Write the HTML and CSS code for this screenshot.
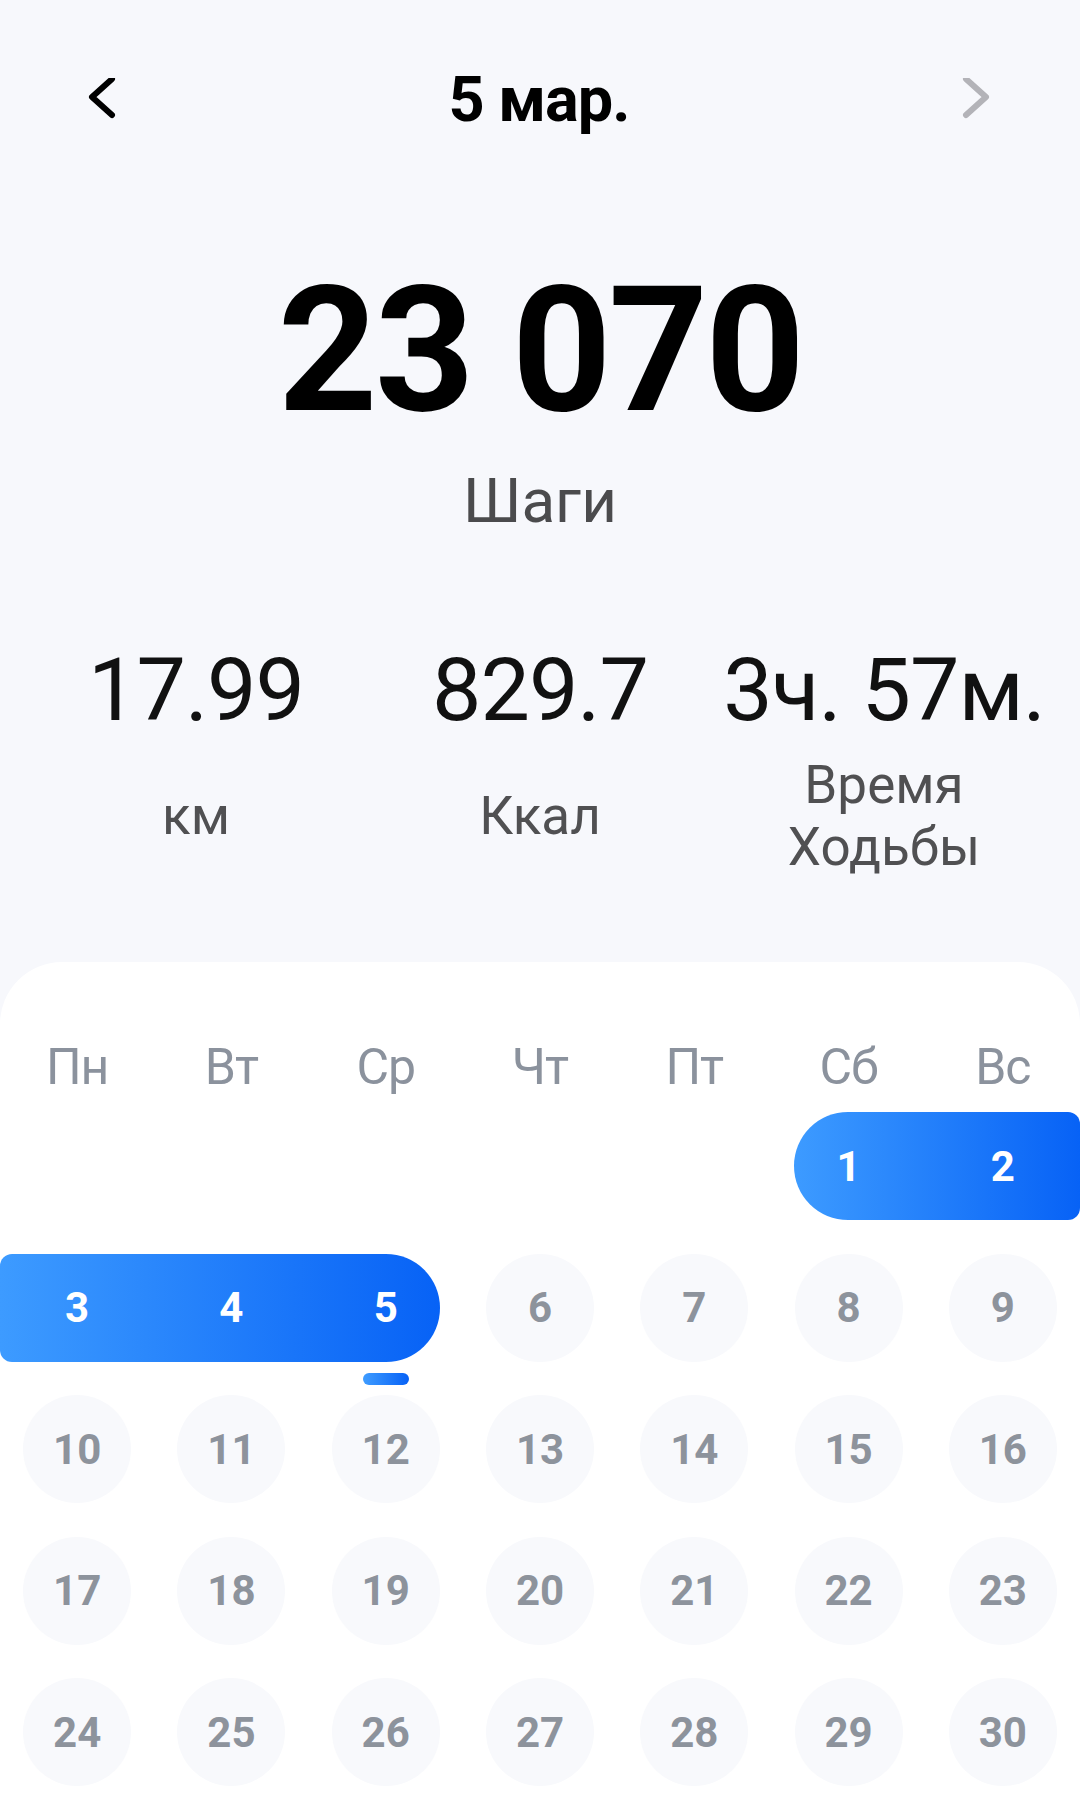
FILE: index.html
```html
<!DOCTYPE html>
<html lang="ru">
<head>
<meta charset="utf-8">
<title>Шаги</title>
<link rel="stylesheet" href="styles.css">
</head>
<body>
<div class="page">
  <header class="header">
    <svg class="chev" width="30" height="44" viewBox="0 0 30 44"><path d="M26 1 L6 19 L26 37" fill="none" stroke="#000" stroke-width="6" stroke-linecap="round" stroke-linejoin="round"/></svg>
    <div class="title">5 мар.</div>
    <svg class="chev" width="30" height="44" viewBox="0 0 30 44"><path d="M4 1 L24 19 L4 37" fill="none" stroke="#b3b3b8" stroke-width="6" stroke-linecap="round" stroke-linejoin="round"/></svg>
  </header>

  <div class="steps">23 070</div>
  <div class="steps-label">Шаги</div>

  <div class="stats">
    <div class="stat">
      <div class="stat-value">17.99</div>
      <div class="stat-label">км</div>
    </div>
    <div class="stat">
      <div class="stat-value">829.7</div>
      <div class="stat-label">Ккал</div>
    </div>
    <div class="stat">
      <div class="stat-value">3ч. 57м.</div>
      <div class="stat-label">Время<br>Ходьбы</div>
    </div>
  </div>

  <section class="card">
    <div class="weekdays">
      <span>Пн</span><span>Вт</span><span>Ср</span><span>Чт</span><span>Пт</span><span>Сб</span><span>Вс</span>
    </div>
    <div class="days">
      <div class="pill pill-r1"></div>
      <div class="pill pill-r2"></div>
      <div class="day sel c6 r1">1</div>
      <div class="day sel c7 r1">2</div>
      <div class="day sel c1 r2">3</div>
      <div class="day sel c2 r2">4</div>
      <div class="day sel c3 r2 today">5</div>
      <div class="blank"></div><div class="blank"></div><div class="blank"></div><div class="blank"></div><div class="blank"></div>
      <div class="day">6</div>
      <div class="day">7</div>
      <div class="day">8</div>
      <div class="day">9</div>
      <div class="day">10</div>
      <div class="day">11</div>
      <div class="day">12</div>
      <div class="day">13</div>
      <div class="day">14</div>
      <div class="day">15</div>
      <div class="day">16</div>
      <div class="day">17</div>
      <div class="day">18</div>
      <div class="day">19</div>
      <div class="day">20</div>
      <div class="day">21</div>
      <div class="day">22</div>
      <div class="day">23</div>
      <div class="day">24</div>
      <div class="day">25</div>
      <div class="day">26</div>
      <div class="day">27</div>
      <div class="day">28</div>
      <div class="day">29</div>
      <div class="day">30</div>
    </div>
  </section>
</div>
</body>
</html>
```

FILE: styles.css
```css
* { box-sizing: border-box; }
html, body {
  margin: 0;
  padding: 0;
  background: #f7f8fc;
}
body {
  font-family: Roboto, "Noto Sans", "Liberation Sans", sans-serif;
}
.page {
  width: 1080px;
  height: 1798px;
  overflow: hidden;
  display: flex;
  flex-direction: column;
}
.header {
  display: flex;
  align-items: center;
  justify-content: space-between;
  padding: 60px 88px 0 86px;
  height: 140px;
}
.chev { display: block; }
.title {
  font-size: 63px;
  font-weight: 700;
  line-height: 80px;
  color: #000;
  letter-spacing: -1px;
}
.steps {
  margin-top: 124px;
  text-align: center;
  font-size: 174px;
  line-height: 174px;
  font-weight: 700;
  color: #000;
  letter-spacing: -3px;
}
.steps-label {
  margin-top: 27px;
  text-align: center;
  font-size: 62px;
  line-height: 72px;
  color: #4b4b4d;
}
.stats {
  margin-top: 109px;
  padding: 0 24px;
  display: grid;
  grid-template-columns: repeat(3, 1fr);
}
.stat {
  display: flex;
  flex-direction: column;
  align-items: center;
}
.stat-value {
  font-size: 88px;
  line-height: 88px;
  color: #111;
  white-space: nowrap;
  letter-spacing: -1px;
}
.stat-label {
  margin-top: 20px;
  height: 124px;
  display: flex;
  align-items: center;
  justify-content: center;
  text-align: center;
  font-size: 53px;
  line-height: 62px;
  color: #505052;
}
.card {
  margin-top: 84px;
  flex: 1;
  background: #fff;
  border-radius: 62px 62px 0 0;
  padding-top: 75px;
}
.weekdays {
  display: grid;
  grid-template-columns: repeat(7, 1fr);
  text-align: center;
  font-size: 50px;
  line-height: 60px;
  color: #8b929d;
  letter-spacing: -1px;
}
.days {
  margin-top: 15px;
  display: grid;
  grid-template-columns: repeat(7, 1fr);
  grid-auto-rows: 108px;
  row-gap: 33.5px;
}
.blank { height: 108px; }
.day {
  position: relative;
  justify-self: center;
  width: 108px;
  height: 108px;
  border-radius: 50%;
  background: #f8f9fc;
  display: flex;
  align-items: center;
  justify-content: center;
  font-size: 42px;
  font-weight: 700;
  color: #8d939c;
}
.day.sel {
  background: transparent;
  color: #fff;
}
.pill {
  height: 108px;
  background: linear-gradient(90deg, #3d9bff 0%, #0762f6 100%);
}
.pill-r1 {
  grid-row: 1;
  grid-column: 6 / 8;
  margin-left: 23px;
  border-radius: 54px 12px 12px 54px;
}
.pill-r2 {
  grid-row: 2;
  grid-column: 1 / 4;
  margin-right: 23px;
  border-radius: 12px 54px 54px 12px;
}
.r1 { grid-row: 1; }
.r2 { grid-row: 2; }
.c1 { grid-column: 1; }
.c2 { grid-column: 2; }
.c3 { grid-column: 3; }
.c6 { grid-column: 6; }
.c7 { grid-column: 7; }
.today::after {
  content: "";
  position: absolute;
  left: 50%;
  top: calc(100% + 11px);
  width: 46px;
  height: 12px;
  margin-left: -23px;
  border-radius: 6px;
  background: linear-gradient(90deg, #3f9cff, #0762f6);
}
```
